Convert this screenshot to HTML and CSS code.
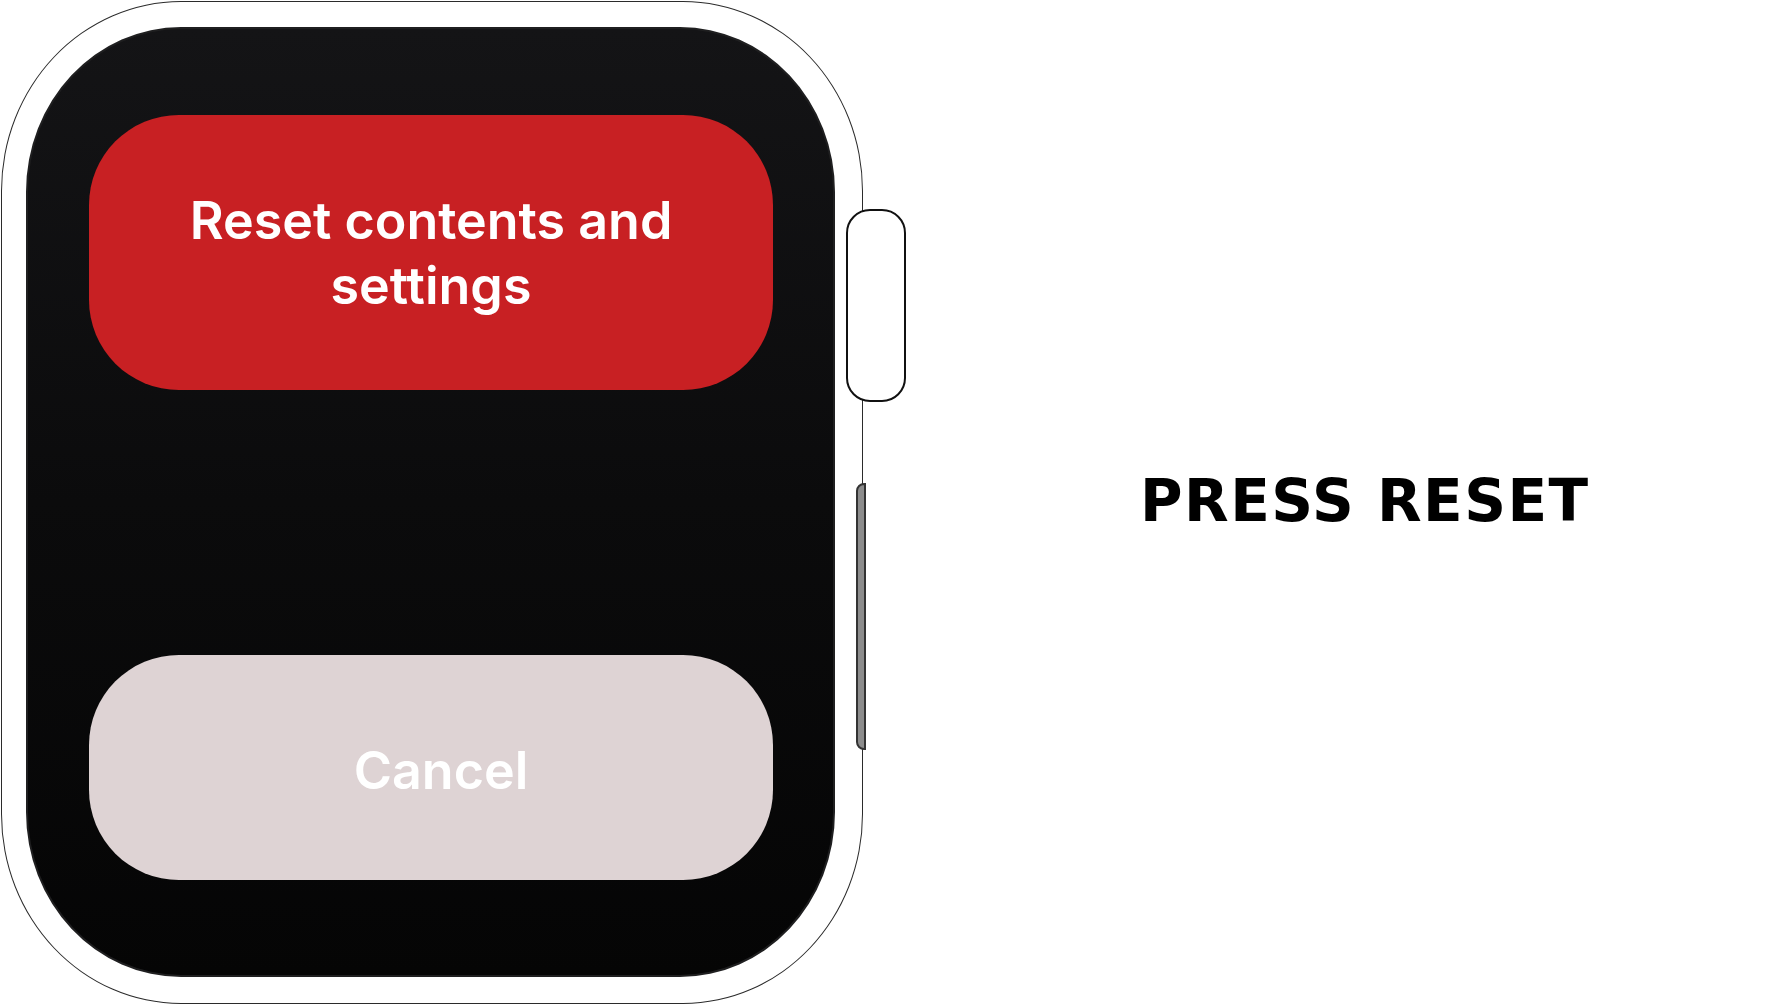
FILE: index.html
```html
<!DOCTYPE html>
<html lang="en">
<head>
    <meta charset="UTF-8">
    <meta name="viewport" content="width=device-width, initial-scale=1.0">
    <title>Press Reset</title>
    <link rel="stylesheet" href="styles.css">
</head>
<body>
    <div class="page">
        <div class="watch">
            <div class="case">
                <div class="screen">
                    <button class="btn btn-reset">Reset contents and<br>settings</button>
                    <button class="btn btn-cancel">Cancel</button>
                </div>
            </div>
            <div class="crown"></div>
            <div class="side-button"></div>
        </div>
        <div class="caption">
            <h1>PRESS RESET</h1>
        </div>
    </div>
</body>
</html>
```

FILE: styles.css
```css
body{
    margin: 0;
    background: #fff;
    font-family: Inter, "Noto Sans", sans-serif;
}
.page{
    display: flex;
    align-items: center;
    width: 1786px;
    height: 1006px;
    overflow: hidden;
}
.watch{
    position: relative;
    width: 910px;
    height: 1006px;
    flex-shrink: 0;
}
.case{
    box-sizing: border-box;
    width: 862px;
    height: 1003px;
    margin: 1px 0 0 1px;
    padding: 25px 27px 26px 24px;
    border: 1.5px solid #2b2b2b;
    border-radius: 180px / 190px;
    display: flex;
}
.screen{
    flex: 1;
    box-sizing: border-box;
    padding: 86px 60px 95px 61px;
    border: 2px solid #1f1f20;
    border-radius: 155px / 165px;
    background: linear-gradient(180deg, #141416 0%, #0b0b0c 50%, #050505 100%);
    display: flex;
    flex-direction: column;
    justify-content: space-between;
}
.btn{
    display: flex;
    align-items: center;
    justify-content: center;
    width: 100%;
    border: none;
    border-radius: 90px;
    color: #fff;
    font-family: Inter, "Noto Sans", sans-serif;
    font-weight: 600;
    font-variant-ligatures: none;
    text-align: center;
    padding: 0;
}
.btn-reset{
    height: 275px;
    background: #c82023;
    font-size: 52px;
    line-height: 65px;
}
.btn-cancel{
    height: 225px;
    background: #ded3d4;
    font-size: 52px;
    padding: 6px 0 0 20px;
}
.crown{
    position: absolute;
    left: 846px;
    top: 209px;
    box-sizing: border-box;
    width: 60px;
    height: 193px;
    border: 2px solid #111;
    border-radius: 24px;
    background: #fff;
}
.side-button{
    position: absolute;
    left: 856px;
    top: 483px;
    box-sizing: border-box;
    width: 10px;
    height: 267px;
    border: 2px solid #333;
    border-radius: 8px 0 0 8px;
    background: #8c8c8c;
}
.caption{
    padding-left: 230px;
    margin-top: -4px;
}
.caption h1{
    margin: 0;
    font-family: "DejaVu Sans", sans-serif;
    font-weight: bold;
    font-size: 58px;
    letter-spacing: 1.5px;
    color: #000;
}
```
